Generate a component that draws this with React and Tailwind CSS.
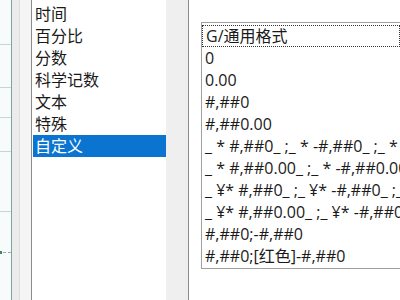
import React from 'react';

const categories = ['时间', '百分比', '分数', '科学记数', '文本', '特殊', '自定义'];

const formats = [
  'G/通用格式',
  '0',
  '0.00',
  '#,##0',
  '#,##0.00',
  '_ * #,##0_ ;_ * -#,##0_ ;_ * "-"_ ;_ @_ ',
  '_ * #,##0.00_ ;_ * -#,##0.00_ ;_ * "-"??_ ;_ @_ ',
  '_ ¥* #,##0_ ;_ ¥* -#,##0_ ;_ ¥* "-"_ ;_ @_ ',
  '_ ¥* #,##0.00_ ;_ ¥* -#,##0.00_ ;_ ¥* "-"??_ ;_ @_ ',
  '#,##0;-#,##0',
  '#,##0;[红色]-#,##0',
];

const font = { fontFamily: '"Open Sans", "Noto Sans CJK SC", sans-serif' };

const App = () => {
  return (
    <div className="flex h-[300px] w-[400px] overflow-hidden bg-white text-[#1a1a1a]" style={font}>
      {/* Sheet edge behind the dialog */}
      <div className="flex w-[12px] shrink-0 flex-col border-r border-[#7fa3a0] bg-[#f8fbfb]">
        <div className="h-[45px] border-b border-[#c9d5d4]" />
        <div className="h-[43px] border-b border-[#c9d5d4]" />
        <div className="h-[30px] border-b border-[#c9d5d4]" />
        <div className="h-[34px] border-b border-[#c9d5d4]" />
        <div className="h-[60px] border-b border-[#c9d5d4]" />
        <div className="mt-[39px] flex items-center">
          <div className="h-[3px] w-[2px] bg-[#3c8a5a]" />
          <div className="ml-[1px] w-[8px] border-t border-dashed border-[#9aa]" />
        </div>
      </div>
      <div className="w-[8px] shrink-0 border-r border-[#dedede] bg-[#ececec]" />
      <div className="w-[11px] shrink-0 bg-[#f5f5f5]" />

      {/* Category list */}
      <div className="flex w-[158px] shrink-0 border-x border-[#8c8c8c] bg-white">
        <div className="flex-1 pl-[1px] pt-[3px]">
          {categories.map((c) => (
            <div
              key={c}
              className={`flex h-[22px] items-center pl-[2px] text-[16px] leading-none ${
                c === '自定义' ? 'bg-[#0a74d0] text-white' : ''
              }`}
            >
              {c}
            </div>
          ))}
        </div>
        <div className="flex w-[22px] flex-col justify-end bg-[#efefef]">
          <div className="-mb-[4px] text-center text-[11px] leading-none text-[#999]">⌄</div>
        </div>
      </div>

      {/* Type list */}
      <div className="min-w-0 flex-1 pl-[12px] pt-[22px]">
        <div className="h-[247px] border-y border-l border-[#a0a0a0] bg-white pt-[2px]">
          {formats.map((f, i) => (
            <div
              key={i}
              className={`flex h-[22px] items-center whitespace-pre pl-[3px] text-[16px] leading-none ${
                i === 0 ? 'border border-dotted border-[#333] pl-[2px]' : ''
              }`}
            >
              {f}
            </div>
          ))}
        </div>
      </div>
    </div>
  );
};

export default App;
